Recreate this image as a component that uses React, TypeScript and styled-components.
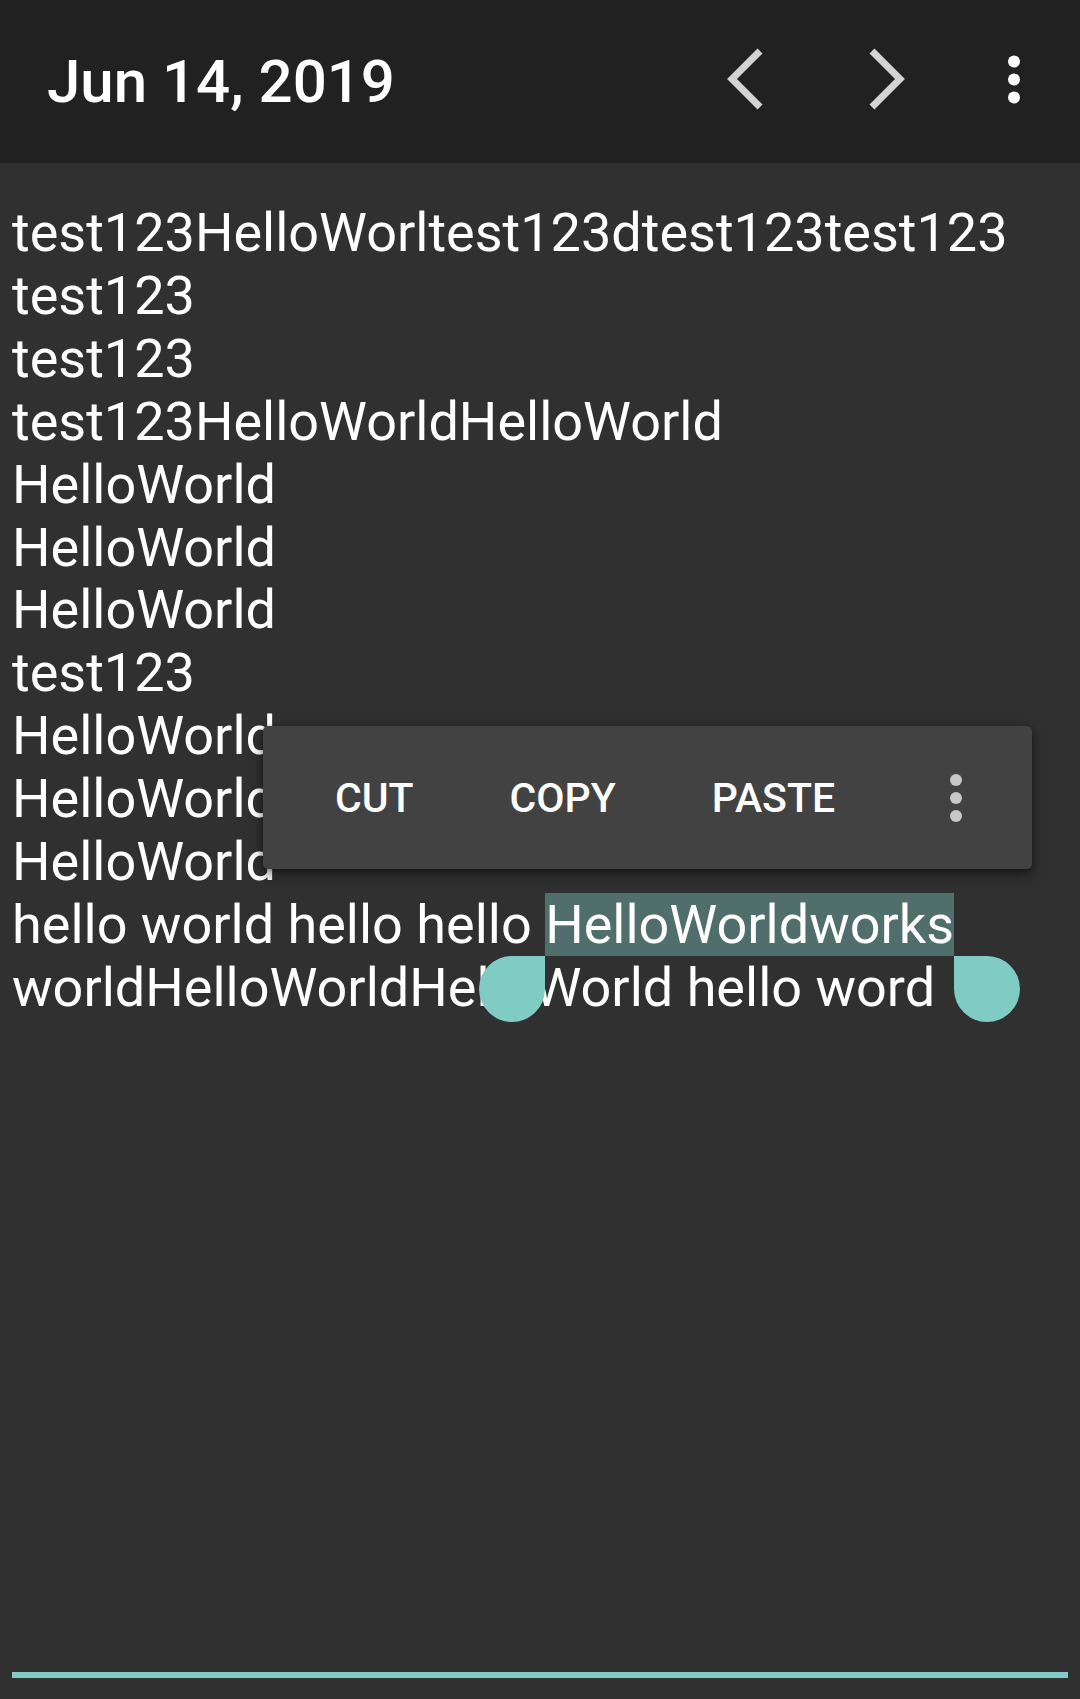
import React from "react";
import styled, { createGlobalStyle } from "styled-components";

const Global = createGlobalStyle`
  html, body {
    margin: 0;
    padding: 0;
    background: #303030;
  }
  body {
    font-family: Roboto, "Noto Sans", "Liberation Sans", sans-serif;
    -webkit-font-smoothing: antialiased;
  }
  #root {
    height: 1699px;
  }
`;

const Page = styled.div`
  width: 1080px;
  height: 1699px;
  display: flex;
  flex-direction: column;
  background: #303030;
  overflow: hidden;
`;

const Toolbar = styled.header`
  flex: 0 0 163px;
  height: 163px;
  display: flex;
  align-items: center;
  padding: 0 12px 0 47px;
  background: #212121;
  box-sizing: border-box;
`;

const Title = styled.h1`
  flex: 1;
  margin: 0;
  font-family: Roboto, "Liberation Sans", sans-serif;
  font-weight: 500;
  font-size: 60px;
  color: #ffffff;
  white-space: nowrap;
`;

const IconButton = styled.button<{ $w: number }>`
  width: ${(p) => p.$w}px;
  height: 126px;
  padding: 0;
  border: 0;
  background: transparent;
  display: flex;
  align-items: center;
  justify-content: center;
`;

const Editor = styled.main`
  position: relative;
  flex: 1;
  margin: 0 12px 21px;
  padding-top: 39px;
  border-bottom: 6px solid #80cbc4;
`;

const TextBody = styled.div`
  font-family: Roboto, "Liberation Sans", sans-serif;
  font-size: 54px;
  line-height: 62.9px;
  color: #ffffff;
`;

const Line = styled.div`
  white-space: pre;
`;

const Selection = styled.span`
  position: relative;
  background: #506e6b;
`;

const Handle = styled.span<{ $side: "start" | "end" }>`
  position: absolute;
  top: 100%;
  width: 66px;
  height: 66px;
  background: #80cbc4;
  ${(p) =>
    p.$side === "start"
      ? "right: 100%; border-radius: 50% 0 50% 50%;"
      : "left: 100%; border-radius: 0 50% 50% 50%;"}
`;

const FloatingBar = styled.div`
  position: absolute;
  left: 251px;
  top: 563px;
  width: 769px;
  height: 143px;
  box-sizing: border-box;
  padding-left: 24px;
  display: flex;
  align-items: center;
  background: #424242;
  border-radius: 5px;
  box-shadow: 0 6px 14px rgba(0, 0, 0, 0.45), 0 1px 4px rgba(0, 0, 0, 0.3);
`;

const BarButton = styled.button`
  height: 100%;
  padding: 0 48px;
  border: 0;
  background: transparent;
  color: #ffffff;
  font-family: Roboto, "Liberation Sans", sans-serif;
  font-weight: 500;
  font-size: 41px;
  letter-spacing: 0;
`;

const OverflowButton = styled.button`
  width: 146px;
  height: 100%;
  padding: 0;
  border: 0;
  background: transparent;
  display: flex;
  align-items: center;
  justify-content: center;
`;

const Chevron = ({ dir }: { dir: "left" | "right" }) => (
  <svg width="40" height="70" viewBox="0 0 40 70">
    <polyline
      points="36,4 8,32 36,60"
      fill="none"
      stroke="#d3d3d3"
      strokeWidth="7"
      strokeLinecap="butt"
      strokeLinejoin="miter"
      transform={dir === "right" ? "translate(40,0) scale(-1,1)" : undefined}
    />
  </svg>
);

const Dots = ({ color, offset }: { color: string; offset: number }) => (
  <svg width="12" height="54" viewBox="0 0 12 54">
    <circle cx="6" cy={6 + offset} r="6" fill={color} />
    <circle cx="6" cy={24 + offset} r="6" fill={color} />
    <circle cx="6" cy={42 + offset} r="6" fill={color} />
  </svg>
);

const lines = [
  "test123HelloWorltest123dtest123test123",
  "test123",
  "test123",
  "test123HelloWorldHelloWorld",
  "HelloWorld",
  "HelloWorld",
  "HelloWorld",
  "test123",
  "HelloWorld",
  "HelloWorld",
  "HelloWorld",
];

export default function App() {
  return (
    <>
      <Global />
      <Page>
        <Toolbar>
          <Title>Jun 14, 2019</Title>
          <IconButton $w={144} aria-label="Previous">
            <Chevron dir="left" />
          </IconButton>
          <IconButton $w={144} aria-label="Next">
            <Chevron dir="right" />
          </IconButton>
          <IconButton $w={108} aria-label="More">
            <Dots color="#ffffff" offset={0.5} />
          </IconButton>
        </Toolbar>
        <Editor>
          <TextBody>
            {lines.map((l, i) => (
              <Line key={i}>{l}</Line>
            ))}
            <Line>
              {"hello world hello hello "}
              <Selection>
                HelloWorldworks
                <Handle $side="start" />
                <Handle $side="end" />
              </Selection>
            </Line>
            <Line>worldHelloWorldHelloWorld hello word</Line>
          </TextBody>
          <FloatingBar>
            <BarButton>CUT</BarButton>
            <BarButton>COPY</BarButton>
            <BarButton>PASTE</BarButton>
            <OverflowButton aria-label="More options">
              <Dots color="#c8c8c8" offset={3} />
            </OverflowButton>
          </FloatingBar>
        </Editor>
      </Page>
    </>
  );
}
